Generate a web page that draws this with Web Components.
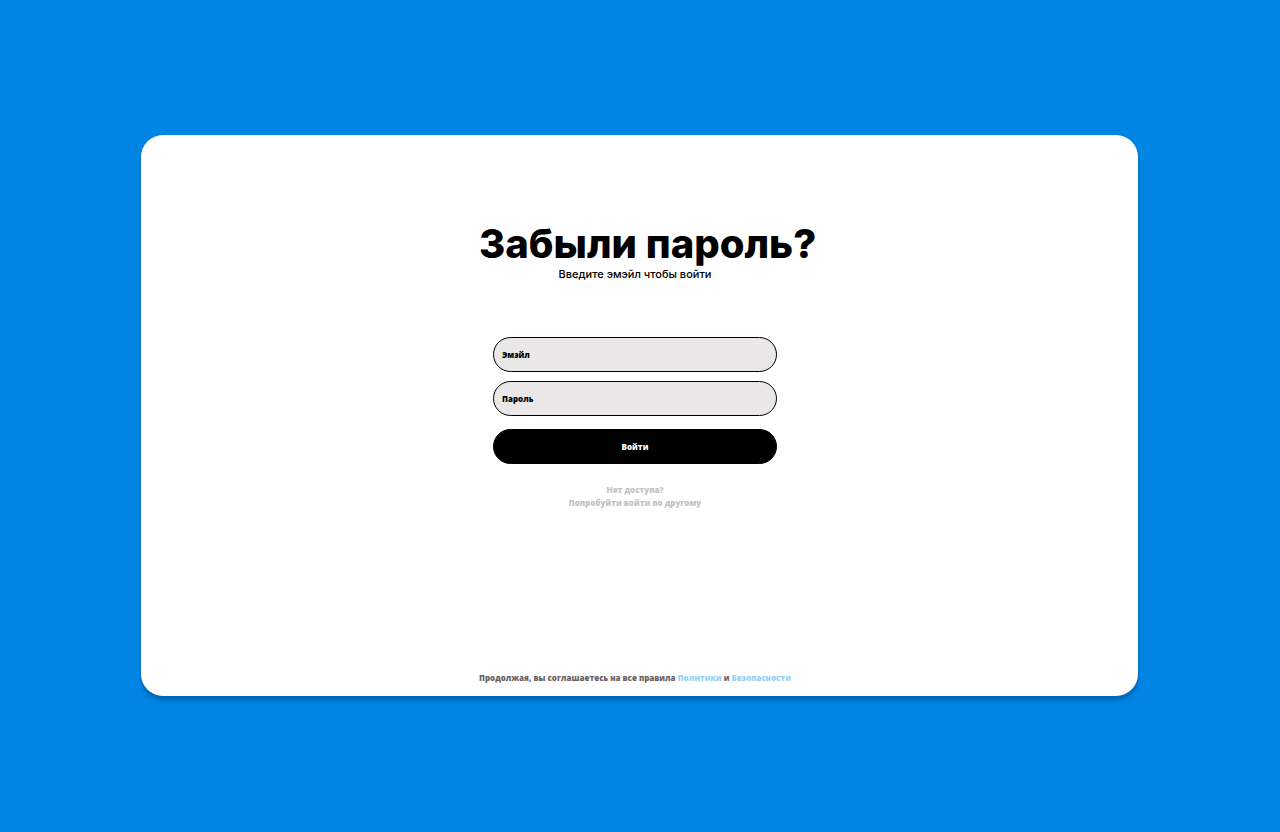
<!DOCTYPE html>
<html lang="ru">
<head>
<meta charset="utf-8">
<meta name="viewport" content="width=device-width, initial-scale=1">
<title>Забыли пароль?</title>
<style>
  body { margin: 0; background: #0085e5; color: #000; font-family: "Open Sans", sans-serif; }
</style>
</head>
<body>
<auth-page>
  <auth-card>
    <auth-heading slot="heading" text="Забыли пароль?">Введите эмэйл чтобы войти</auth-heading>
    <login-form></login-form>
    <legal-note slot="footer"></legal-note>
  </auth-card>
</auth-page>
<script>
  class BaseElement extends HTMLElement {
    constructor() {
      super();
      this.attachShadow({ mode: 'open' }).innerHTML = this.constructor.markup;
    }
  }

  customElements.define('auth-page', class extends BaseElement {
    static markup = `
      <style>
        :host { display: flex; box-sizing: border-box; min-height: 100vh; padding: 135px 142px 136px 141px; }
        main { display: flex; flex: 1; min-width: 0; }
        @media (max-width: 760px) { :host { padding: 24px; } }
      </style>
      <main><slot></slot></main>`;
  });

  customElements.define('auth-card', class extends BaseElement {
    static markup = `
      <style>
        :host { display: flex; flex: 1; min-width: 0; flex-direction: column; align-items: center; box-sizing: border-box;
          padding: 85px 9px 12px 0; border-radius: 22px; background: #fff;
          box-shadow: 0 4px 4px rgba(0, 0, 0, .25); }
        .column { display: flex; flex: 1; flex-direction: column; width: 312px; }
        .body { flex: 1; padding: 57px 14px 40px; }
      </style>
      <div class="column">
        <slot name="heading"></slot>
        <div class="body"><slot></slot></div>
        <slot name="footer"></slot>
      </div>`;
  });

  customElements.define('auth-heading', class extends BaseElement {
    static markup = `
      <style>
        :host { display: block; font-family: Inter, sans-serif; }
        h1 { margin: 0; font-size: 40px; font-weight: 760; line-height: 48px; white-space: nowrap; }
        p { margin: 0; font-size: 11px; font-weight: 450; line-height: 12px; text-align: center; }
      </style>
      <h1></h1>
      <p><slot></slot></p>`;
    connectedCallback() {
      this.shadowRoot.querySelector('h1').textContent = this.getAttribute('text');
    }
  });

  customElements.define('login-form', class extends BaseElement {
    static markup = `
      <style>
        :host { display: block; }
        form { display: flex; flex-direction: column; gap: 9px; }
        input, button { box-sizing: border-box; width: 100%; height: 35px; margin: 0; border: 1px solid #000;
          border-radius: 18px; font: 800 8px/12px "Open Sans", sans-serif; color: #000; }
        input { padding: 0 8px; background: #e9e7e8; }
        input::placeholder { color: #000; opacity: 1; }
        button { margin-top: 4px; background: #000; color: #fff; cursor: pointer; }
        p { margin: 19px 0 0; text-align: center; font-size: 8px; font-weight: 800; line-height: 13px; color: #c4c2c2; }
        a { color: inherit; text-decoration: none; }
      </style>
      <form>
        <input type="email" aria-label="Эмэйл" placeholder="Эмэйл" autocomplete="email">
        <input type="password" aria-label="Пароль" placeholder="Пароль" autocomplete="current-password">
        <button type="submit">Войти</button>
      </form>
      <p>Нет доступа?<br><a href="#other">Попробуйти войти по другому</a></p>`;
  });

  customElements.define('legal-note', class extends BaseElement {
    static markup = `
      <style>
        :host { display: block; }
        p { margin: 0; font-size: 8px; font-weight: 800; line-height: 12px; white-space: nowrap; color: #6b6363; }
        a { color: #94d2fa; text-decoration: none; }
      </style>
      <p>Продолжая, вы соглашаетесь на все правила <a href="#policy">Политики</a> и <a href="#security">Безопасности</a></p>`;
  });
</script>
</body>
</html>
